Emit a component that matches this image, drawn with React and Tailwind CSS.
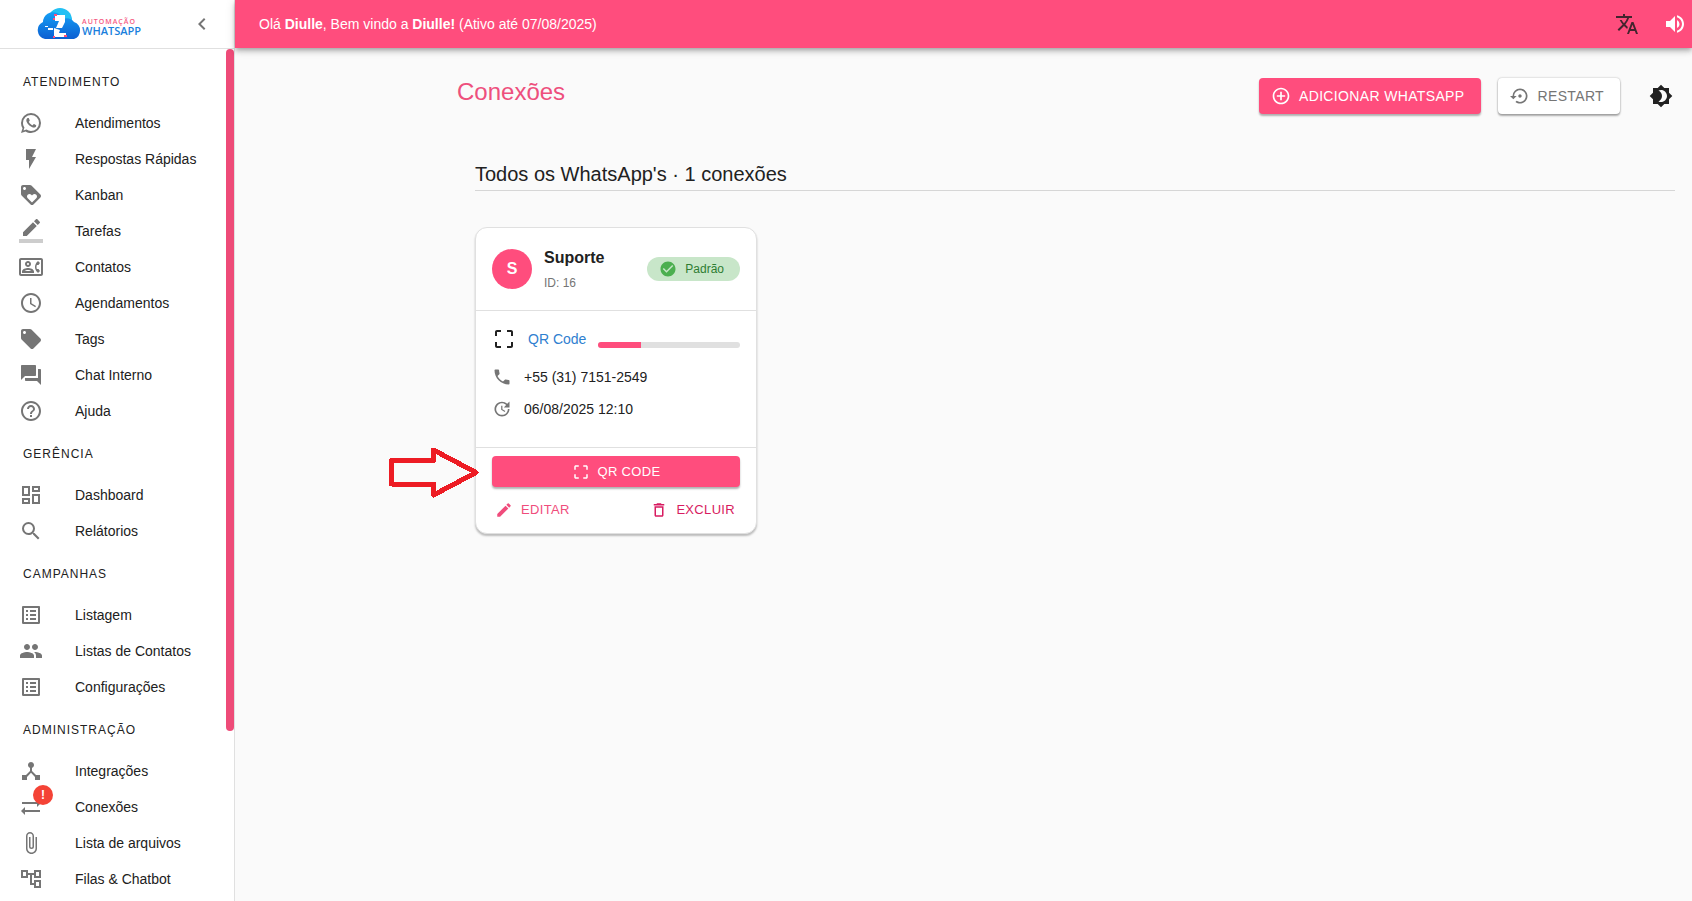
import React from 'react'
import {
  MdFlashOn, MdOutlineContactPhone, MdSchedule, MdLocalOffer, MdForum, MdHelpOutline, MdOutlineDashboard,
  MdSearch, MdOutlineListAlt, MdPeople, MdDeviceHub, MdAttachFile, MdOutlineAccountTree, MdChevronLeft,
  MdTranslate, MdVolumeUp, MdAddCircleOutline, MdSettingsBackupRestore, MdBrightness4, MdCheckCircle,
  MdCropFree, MdPhone, MdUpdate, MdEdit, MdDeleteOutline
} from 'react-icons/md'

function WhatsAppIcon({ className }) {
  return (
    <svg viewBox="0 0 24 24" fill="currentColor" className={className} aria-hidden="true">
      <path d="M16.75 13.96c.25.13.41.2.46.3.06.11.04.61-.21 1.18-.2.56-1.24 1.1-1.7 1.12-.46.02-.47.36-2.96-.73-2.49-1.09-3.99-3.75-4.11-3.92-.12-.17-.96-1.38-.92-2.61.05-1.22.69-1.8.95-2.04.24-.26.51-.29.68-.26h.47c.15 0 .36-.06.55.45l.69 1.87c.06.13.1.28.01.44l-.27.41-.39.42c-.12.12-.26.25-.12.5.12.26.62 1.09 1.32 1.78.91.88 1.71 1.17 1.95 1.3.24.14.39.12.54-.04l.81-.94c.19-.25.35-.19.58-.11l1.67.88M12 2a10 10 0 0 1 10 10 10 10 0 0 1-10 10c-1.97 0-3.8-.57-5.35-1.55L2 22l1.55-4.65A9.969 9.969 0 0 1 2 12 10 10 0 0 1 12 2m0 2a8 8 0 0 0-8 8c0 1.72.54 3.31 1.46 4.61L4.5 19.5l2.89-.96A7.95 7.95 0 0 0 12 20a8 8 0 0 0 8-8 8 8 0 0 0-8-8z" />
    </svg>
  )
}

function LoyaltyIcon({ className }) {
  return (
    <svg viewBox="0 0 24 24" fill="currentColor" className={className} aria-hidden="true">
      <path d="M21.41 11.58l-9-9C12.05 2.22 11.55 2 11 2H4c-1.1 0-2 .9-2 2v7c0 .55.22 1.05.59 1.42l9 9c.36.36.86.58 1.41.58.55 0 1.05-.22 1.41-.59l7-7c.37-.36.59-.86.59-1.41 0-.55-.23-1.06-.59-1.42zM5.5 7C4.67 7 4 6.33 4 5.5S4.67 4 5.5 4 7 4.67 7 5.5 6.33 7 5.5 7zm11.77 8.27L13 19.54l-4.27-4.27C8.28 14.81 8 14.19 8 13.5c0-1.38 1.12-2.5 2.5-2.5.69 0 1.32.28 1.77.74l.73.72.73-.73c.45-.45 1.08-.73 1.77-.73 1.38 0 2.5 1.12 2.5 2.5 0 .69-.28 1.32-.73 1.77z" />
    </svg>
  )
}

function BorderColorIcon({ className }) {
  return (
    <svg viewBox="0 0 24 24" fill="currentColor" className={className} aria-hidden="true">
      <path d="M17.75 7L14 3.25l-10 10V17h3.75l10-10zm2.96-2.96c.39-.39.39-1.02 0-1.41L18.37.29c-.39-.39-1.02-.39-1.41 0L15 2.25 18.75 6l1.96-1.96z" />
      <path fillOpacity=".36" d="M0 20h24v4H0z" />
    </svg>
  )
}

function SyncAltIcon({ className }) {
  return (
    <svg viewBox="0 0 24 24" fill="currentColor" className={className} aria-hidden="true">
      <path d="M22 8l-4-4v3H3v2h15v3l4-4zM2 16l4 4v-3h15v-2H6v-3l-4 4z" />
    </svg>
  )
}

const sections = [
  {
    title: 'Atendimento',
    items: [
      { label: 'Atendimentos', icon: WhatsAppIcon },
      { label: 'Respostas Rápidas', icon: MdFlashOn },
      { label: 'Kanban', icon: LoyaltyIcon },
      { label: 'Tarefas', icon: BorderColorIcon },
      { label: 'Contatos', icon: MdOutlineContactPhone },
      { label: 'Agendamentos', icon: MdSchedule },
      { label: 'Tags', icon: MdLocalOffer },
      { label: 'Chat Interno', icon: MdForum },
      { label: 'Ajuda', icon: MdHelpOutline },
    ],
  },
  {
    title: 'Gerência',
    items: [
      { label: 'Dashboard', icon: MdOutlineDashboard },
      { label: 'Relátorios', icon: MdSearch },
    ],
  },
  {
    title: 'Campanhas',
    items: [
      { label: 'Listagem', icon: MdOutlineListAlt },
      { label: 'Listas de Contatos', icon: MdPeople },
      { label: 'Configurações', icon: MdOutlineListAlt },
    ],
  },
  {
    title: 'Administração',
    items: [
      { label: 'Integrações', icon: MdDeviceHub },
      { label: 'Conexões', icon: SyncAltIcon, alert: true },
      { label: 'Lista de arquivos', icon: MdAttachFile },
      { label: 'Filas & Chatbot', icon: MdOutlineAccountTree },
    ],
  },
]

function Logo() {
  return (
    <svg width="108" height="32" viewBox="0 0 108 32" role="img" aria-label="Automação Whatsapp">
      <defs>
        <linearGradient id="cloud" x1="0" y1="0" x2="0" y2="1">
          <stop offset="0" stopColor="#149ff5" />
          <stop offset="1" stopColor="#0c5fd2" />
        </linearGradient>
      </defs>
      <circle cx="24" cy="12" r="12" fill="#22c0f4" />
      <path d="M9 31a9 9 0 0 1-2-17 10 10 0 0 1 14-9c3 1 5 3 6 6a10 10 0 0 1 11 3 9 9 0 0 1 0 17z" fill="url(#cloud)" />
      <path d="M19 7h10v7l-3 6h-6l3-7h-4z" fill="#fff" />
      <path d="M18 20l6 2-1 3h7v4H18z" fill="#fff" />
      <path d="M12 20h5v2h-5zM9 18h3v1H9z" fill="#fff" />
      <path d="M18 6h3v2h-3zM17 10h2v2h-2zM28 27h3v2h-3zM17 28h2v2h-2z" fill="#ff4d7d" />
      <text x="46" y="16" fontSize="7" fontWeight="600" letterSpacing="1" fill="#f55b84" fontFamily="'Open Sans', sans-serif">AUTOMAÇÃO</text>
      <text x="46" y="27" fontSize="11" fontWeight="600" fill="#1a7fdd" fontFamily="'Open Sans', sans-serif">WHATSAPP</text>
    </svg>
  )
}

function NavItem({ item }) {
  const Icon = item.icon
  return (
    <li>
      <a href="#" className="flex h-9 items-center pl-[19px] text-sm text-[#212121]">
        <span className="w-14 shrink-0">
          <span className="relative block size-6">
            <Icon className="size-6 text-[#757575]" />
            {item.alert && (
              <span className="absolute -top-2.5 left-3.5 flex size-5 items-center justify-center rounded-full bg-[#f44336] text-xs font-bold text-white">!</span>
            )}
          </span>
        </span>
        {item.label}
      </a>
    </li>
  )
}

function Sidebar() {
  return (
    <aside className="flex w-[235px] shrink-0 flex-col border-r border-[#e0e0e0] bg-white">
      <div className="flex h-[49px] shrink-0 items-center justify-between border-b border-[#e0e0e0] pl-9 pr-5">
        <Logo />
        <button type="button" aria-label="Recolher menu" className="text-[#757575]">
          <MdChevronLeft className="size-6" />
        </button>
      </div>
      <div className="flex min-h-0 flex-1">
        <nav className="min-w-0 flex-1 overflow-hidden pt-2">
          {sections.map((section) => (
            <div key={section.title}>
              <h2 className="pt-0.5 pl-[23px] text-xs leading-[46px] tracking-[1px] text-[#212121] uppercase">{section.title}</h2>
              <ul>
                {section.items.map((item) => <NavItem key={item.label} item={item} />)}
              </ul>
            </div>
          ))}
        </nav>
        <div className="h-4/5 w-2 rounded-full bg-[#ee4b78]"></div>
      </div>
    </aside>
  )
}

function Topbar() {
  return (
    <header className="z-10 flex h-12 shrink-0 items-center justify-between bg-[#ff4d7d] pl-6 pr-[5px] text-sm text-white shadow-[0_2px_4px_-1px_rgba(0,0,0,0.2),0_4px_5px_0_rgba(0,0,0,0.14),0_1px_10px_0_rgba(0,0,0,0.12)]">
      <p>Olá <b>Diulle</b>, Bem vindo a <b>Diulle!</b> (Ativo até 07/08/2025)</p>
      <div className="flex gap-6">
        <button type="button" aria-label="Idioma" className="text-[#43242e]"><MdTranslate className="size-6" /></button>
        <button type="button" aria-label="Volume"><MdVolumeUp className="size-6" /></button>
      </div>
    </header>
  )
}

function ConnectionCard() {
  return (
    <article className="relative w-[282px] rounded-xl border border-[#e0e0e0] bg-white shadow-[0_2px_2px_rgba(0,0,0,0.25)]">
      <div className="flex items-center border-b border-[#e0e0e0] p-4">
        <div className="flex size-10 items-center justify-center rounded-full bg-[#ff4d7d] font-bold text-white">S</div>
        <div className="ml-3 flex-1">
          <h3 className="font-bold leading-7">Suporte</h3>
          <p className="text-xs leading-[22px] text-[#757575]">ID: 16</p>
        </div>
        <span className="flex h-6 items-center gap-2 rounded-full bg-[#c8e6c9] pl-3 pr-4 text-xs text-[#2e7d32]">
          <MdCheckCircle className="size-[18px] text-[#4caf50]" />
          Padrão
        </span>
      </div>

      <div className="border-b border-[#e0e0e0] px-4 pt-4 pb-7 text-sm">
        <div className="flex items-center">
          <MdCropFree className="size-6" />
          <span className="ml-3 text-[#2f80d0]">QR Code</span>
          <div className="mt-3 ml-3 h-1.5 flex-1 overflow-hidden rounded-full bg-[#e0e0e0]">
            <div className="h-full w-[30%] bg-[#ff4d7d]"></div>
          </div>
        </div>
        <div className="mt-4 flex items-center gap-3">
          <MdPhone className="size-5 text-[#757575]" />
          +55 (31) 7151-2549
        </div>
        <div className="mt-3 flex items-center gap-3">
          <MdUpdate className="size-5 text-[#757575]" />
          06/08/2025 12:10
        </div>
      </div>

      <div className="px-4 py-2 text-[13px] leading-[23px] tracking-wide">
        <button type="button" className="flex w-full items-center justify-center gap-2 rounded bg-[#ff4d7d] py-1 text-white uppercase shadow-[0_2px_2px_rgba(0,0,0,0.3)]">
          <MdCropFree className="size-[18px]" />
          QR Code
        </button>
        <div className="mt-[7px] flex justify-between">
          <button type="button" className="flex items-center gap-2 py-1 pr-[5px] pl-[3px] text-[#f04c7c] uppercase">
            <MdEdit className="size-[18px]" />
            Editar
          </button>
          <button type="button" className="flex items-center gap-2 py-1 pr-[5px] pl-[3px] text-[#d81b60] uppercase">
            <MdDeleteOutline className="size-[18px]" />
            Excluir
          </button>
        </div>
      </div>

      {/* arrow pointing at the QR Code button */}
      <svg className="pointer-events-none absolute top-[218px] -left-[88px]" width="94" height="54" viewBox="0 0 94 54" fill="none" stroke="#ed1c24" strokeWidth="5" shapeRendering="crispEdges" aria-hidden="true">
        <path d="M3.5 14.5H45.5V4L88 26.5L45.5 49V38H3.5Z" strokeLinejoin="round" />
      </svg>
    </article>
  )
}

function App() {
  return (
    <div className="flex h-screen overflow-hidden bg-[#fafafa] font-['Liberation_Sans',Arial,sans-serif] text-[#212121]">
      <Sidebar />
      <div className="flex min-w-0 flex-1 flex-col">
        <Topbar />
        <main className="ml-auto w-full max-w-[1235px] pt-[30px]">
          <div className="flex items-start justify-between pr-[19px]">
            <h1 className="text-2xl leading-7 text-[#ee4f7d]">Conexões</h1>
            <div className="flex items-center gap-[17px] text-sm tracking-wide">
              <button type="button" className="flex h-9 items-center gap-2 rounded bg-[#ff4d7d] pl-3 pr-4 text-white uppercase shadow-[0_2px_2px_rgba(0,0,0,0.3)]">
                <MdAddCircleOutline className="size-5" />
                Adicionar Whatsapp
              </button>
              <button type="button" className="flex h-9 items-center gap-2 rounded bg-white pl-3 pr-4 text-[#757575] uppercase shadow-[0_0_2px_rgba(0,0,0,0.3),0_2px_2px_rgba(0,0,0,0.3)]">
                <MdSettingsBackupRestore className="size-5" />
                Restart
              </button>
              <button type="button" aria-label="Alternar tema" className="ml-3"><MdBrightness4 className="size-6" /></button>
            </div>
          </div>

          <section className="mt-11 pr-[17px] pl-[18px]">
            <h2 className="border-b border-[#d6d6d6] text-xl leading-8">Todos os WhatsApp's · 1 conexões</h2>
            <div className="mt-9">
              <ConnectionCard />
            </div>
          </section>
        </main>
      </div>
    </div>
  )
}

export default App
